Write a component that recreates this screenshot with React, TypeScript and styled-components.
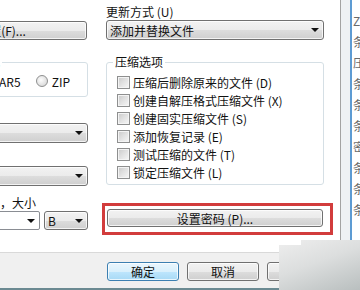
import React from 'react';
import styled, { createGlobalStyle } from 'styled-components';

const GlobalStyle = createGlobalStyle`
  html, body {
    margin: 0;
    padding: 0;
    background: #fff;
  }
  body {
    width: 360px;
    height: 290px;
    overflow: hidden;
    font-family: "Noto Sans CJK SC", "Liberation Sans", sans-serif;
    font-size: 12px;
    color: #111;
  }
`;

const Screen = styled.div`
  position: relative;
  width: 360px;
  height: 290px;
  overflow: hidden;
  display: flex;
`;

const Dialog = styled.div`
  width: 340px;
  flex: none;
  display: flex;
  flex-direction: column;
  background: #fff;
`;

const Body = styled.div`
  height: 252px;
  flex: none;
  display: flex;
`;

// left column is cut by the screenshot edge, its parts run off to the left
const LeftCol = styled.div`
  width: 88px;
  flex: none;
  display: flex;
  flex-direction: column;
  align-items: flex-start;
  padding-top: 21px;
`;

const RightCol = styled.div`
  width: 218px;
  flex: none;
  margin-left: 18px;
  display: flex;
  flex-direction: column;
  align-items: flex-start;
`;

const Button = styled.button<{ $primary?: boolean }>`
  box-sizing: border-box;
  height: 19px;
  margin: 0;
  padding: 0;
  border: 1px solid ${(p) => (p.$primary ? '#3c7fb1' : '#707070')};
  border-radius: 3px;
  background: ${(p) =>
    p.$primary
      ? 'linear-gradient(#eaf6fd 0%, #d9f0fc 50%, #bee6fd 50%, #a7d9f5 100%)'
      : 'linear-gradient(#f2f2f2 0%, #ebebeb 50%, #dddddd 50%, #cfcfcf 100%)'};
  box-shadow: inset 0 0 0 1px rgba(255, 255, 255, 0.75);
  font: inherit;
  color: inherit;
  line-height: 17px;
  text-align: center;
  white-space: nowrap;
`;

const SideButton = styled(Button)<{ $shift: number; $w: number }>`
  margin-left: ${(p) => -p.$shift}px;
  width: ${(p) => p.$w}px;
`;

const Combo = styled.div<{ $shift?: number; $w: number; $h?: number; $edit?: boolean }>`
  box-sizing: border-box;
  flex: none;
  display: flex;
  align-items: center;
  justify-content: space-between;
  margin-left: ${(p) => -(p.$shift || 0)}px;
  width: ${(p) => p.$w}px;
  height: ${(p) => p.$h || 20}px;
  padding: 0 4px 0 3px;
  border: 1px solid ${(p) => (p.$edit ? '#8a8d93' : '#707070')};
  border-radius: ${(p) => (p.$edit ? '2px' : '3px')};
  background: ${(p) =>
    p.$edit ? '#fff' : 'linear-gradient(#f2f2f2 0%, #ebebeb 50%, #dddddd 50%, #cfcfcf 100%)'};
  box-shadow: ${(p) => (p.$edit ? 'none' : 'inset 0 0 0 1px rgba(255, 255, 255, 0.75)')};
  white-space: nowrap;
  overflow: hidden;
`;

const Arrow = styled.span`
  flex: none;
  width: 0;
  height: 0;
  border-left: 4px solid transparent;
  border-right: 4px solid transparent;
  border-top: 4px solid #111;
`;

const Group = styled.div<{ $shift?: number; $w: number; $h: number }>`
  position: relative;
  box-sizing: border-box;
  flex: none;
  margin-left: ${(p) => -(p.$shift || 0)}px;
  width: ${(p) => p.$w}px;
  height: ${(p) => p.$h}px;
  border: 1px solid #d5dfe5;
  border-radius: 3px;
`;

const Legend = styled.span<{ $left: number }>`
  position: absolute;
  top: -8px;
  left: ${(p) => p.$left}px;
  padding: 0 2px;
  line-height: 14px;
  background: #fff;
  white-space: nowrap;
`;

const RadioRow = styled.div`
  height: 100%;
  display: flex;
  align-items: center;
  justify-content: flex-end;
  gap: 15px;
  padding: 3px 17px 0 0;
  box-sizing: border-box;
`;

const RadioItem = styled.span`
  display: flex;
  align-items: center;
  gap: 4px;
  white-space: nowrap;
`;

const RadioDot = styled.span`
  box-sizing: border-box;
  width: 12px;
  height: 12px;
  border-radius: 50%;
  border: 1px solid #8e8f8f;
  background: radial-gradient(circle at 40% 40%, #fdfdfd 0%, #e4e4e4 55%, #cfcfcf 100%);
`;

const CheckList = styled.div`
  display: flex;
  flex-direction: column;
  padding: 10px 0 0 10px;
`;

const CheckRow = styled.div`
  height: 18px;
  display: flex;
  align-items: center;
  gap: 3px;
  white-space: nowrap;
`;

const CheckBox = styled.span`
  box-sizing: border-box;
  flex: none;
  width: 13px;
  height: 13px;
  border: 1px solid #8e8f8f;
  background: linear-gradient(135deg, #c9c9c9 0%, #e2e2e2 50%, #f7f7f7 100%);
  box-shadow: inset 0 0 0 1px #f4f4f4;
`;

const FieldLabel = styled.div<{ $shift: number; $w: number; $top: number; $right?: boolean }>`
  margin-left: ${(p) => -p.$shift}px;
  margin-top: ${(p) => p.$top}px;
  width: ${(p) => p.$w}px;
  line-height: 14px;
  height: 14px;
  text-align: ${(p) => (p.$right ? 'right' : 'left')};
  white-space: nowrap;
`;

const TopLabel = styled.div`
  padding-top: 4px;
  line-height: 16px;
  white-space: nowrap;
`;

const SizeRow = styled.div`
  display: flex;
  gap: 4px;
  margin-top: 1px;
`;

const Highlight = styled.div`
  box-sizing: border-box;
  margin: 18px 0 0 -4px;
  width: 231px;
  padding: 3px 7px 5px 2px;
  border: 3px solid #d23c3c;
`;

const Footer = styled.div`
  flex: 1;
  box-sizing: border-box;
  display: flex;
  gap: 8px;
  padding: 9px 0 0 107px;
  border-top: 1px solid #d9d9d9;
  border-bottom: 2px solid #6b8a92;
  background: #f0f0f0;
`;

const Frame = styled.div`
  width: 10px;
  flex: none;
  box-sizing: border-box;
  border-left: 1px solid #a3a3a3;
  background: #eef1f4;
`;

const BackWindow = styled.div`
  flex: 1;
  box-sizing: border-box;
  border-left: 2px solid #5d9bd3;
  padding: 10px 0 0 1px;
  background: #fff;
  overflow: hidden;
  color: #6a6a6a;
  line-height: 21px;
  white-space: nowrap;
`;

// soft grey blot over the lower right corner of the shot
const Shade = styled.div`
  position: absolute;
  left: 279px;
  top: 240px;
  width: 81px;
  height: 50px;
  clip-path: polygon(22px 0, 100% 0, 100% 100%, 0 100%, 0 5px, 22px 5px);
  background: linear-gradient(160deg, #eeeeee 0%, #dcdede 45%, #b9bfbf 100%);
`;

const backRows = ['ZIP', '条', '压', '条', '条', '条', '密', '条', '条', '条'];

const options = [
  '压缩后删除原来的文件 (D)',
  '创建自解压格式压缩文件 (X)',
  '创建固实压缩文件 (S)',
  '添加恢复记录 (E)',
  '测试压缩的文件 (T)',
  '锁定压缩文件 (L)',
];

export default function App() {
  return (
    <>
      <GlobalStyle />
      <Screen>
        <Dialog>
          <Body>
            <LeftCol>
              <SideButton $shift={84} $w={171}>配置(F)...</SideButton>
              <Group $shift={152} $w={240} $h={35} style={{ marginTop: 22 }}>
                <Legend $left={77}>压缩文件格式</Legend>
                <RadioRow>
                  <RadioItem>
                    <RadioDot />
                    RAR
                  </RadioItem>
                  <RadioItem>
                    <RadioDot />
                    RAR5
                  </RadioItem>
                  <RadioItem>
                    <RadioDot />
                    ZIP
                  </RadioItem>
                </RadioRow>
              </Group>
              <FieldLabel $shift={100} $w={120} $top={9}>压缩方式(C)</FieldLabel>
              <Combo $shift={100} $w={188} style={{ marginTop: 3 }}>
                标准
                <Arrow />
              </Combo>
              <FieldLabel $shift={100} $w={120} $top={8}>字典大小(I)</FieldLabel>
              <Combo $shift={100} $w={188} style={{ marginTop: 1 }}>
                4096 KB
                <Arrow />
              </Combo>
              <FieldLabel $shift={100} $w={136} $top={10} $right>
                切分为分卷(V)，大小
              </FieldLabel>
              <SizeRow>
                <Combo $shift={100} $w={140} $h={19} $edit>
                  <span />
                  <Arrow />
                </Combo>
                <Combo $w={44} $h={19}>
                  B
                  <Arrow />
                </Combo>
              </SizeRow>
            </LeftCol>
            <RightCol>
              <TopLabel>更新方式 (U)</TopLabel>
              <Combo $w={218}>
                添加并替换文件
                <Arrow />
              </Combo>
              <Group $w={218} $h={123} style={{ marginTop: 22 }}>
                <Legend $left={6}>压缩选项</Legend>
                <CheckList>
                  {options.map((o) => (
                    <CheckRow key={o}>
                      <CheckBox />
                      {o}
                    </CheckRow>
                  ))}
                </CheckList>
              </Group>
              <Highlight>
                <Button style={{ width: 216, height: 18 }}>设置密码 (P)...</Button>
              </Highlight>
            </RightCol>
          </Body>
          <Footer>
            <Button $primary style={{ width: 72 }}>确定</Button>
            <Button style={{ width: 72 }}>取消</Button>
            <Button style={{ width: 72 }}>帮助</Button>
          </Footer>
        </Dialog>
        <Frame />
        <BackWindow>
          {backRows.map((r, i) => (
            <div key={i}>{r}</div>
          ))}
        </BackWindow>
        <Shade />
      </Screen>
    </>
  );
}
